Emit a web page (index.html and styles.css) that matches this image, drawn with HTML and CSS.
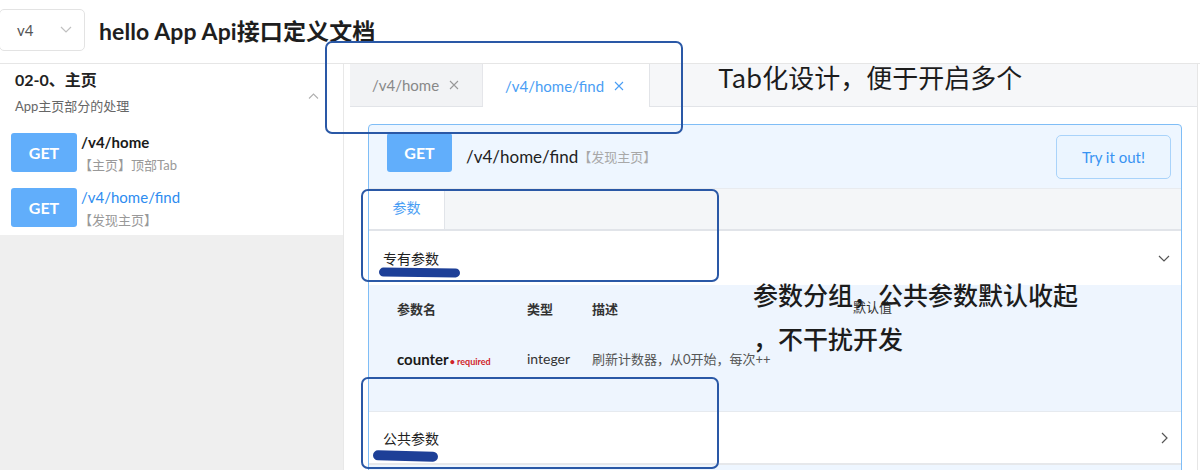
FILE: index.html
```html
<!DOCTYPE html>
<html lang="zh">
<head>
<meta charset="utf-8">
<title>hello App Api接口定义文档</title>
<link rel="stylesheet" href="styles.css">
</head>
<body>
<div class="page">
  <header class="topbar">
    <div class="select">
      <span class="select-val">v4</span>
      <svg class="select-arrow" width="12" height="7" viewBox="0 0 12 7"><polyline points="1,1 6,6 11,1" fill="none" stroke="#c0c0c0" stroke-width="1.2"/></svg>
    </div>
    <h1 class="title">hello App Api接口定义文档</h1>
  </header>
  <div class="body">
    <aside class="sidebar">
      <div class="side-white">
        <div class="group-head">
          <div class="group-text">
            <div class="group-title">02-0、主页</div>
            <div class="group-desc">App主页部分的处理</div>
          </div>
          <svg class="group-arrow" width="11" height="6" viewBox="0 0 11 6"><polyline points="1,5.5 5.5,1 10,5.5" fill="none" stroke="#b0b0b0" stroke-width="1.1"/></svg>
        </div>
        <div class="item">
          <span class="get">GET</span>
          <div class="item-text">
            <div class="item-path">/v4/home</div>
            <div class="item-sub">【主页】顶部Tab</div>
          </div>
        </div>
        <div class="item">
          <span class="get">GET</span>
          <div class="item-text">
            <div class="item-path active">/v4/home/find</div>
            <div class="item-sub">【发现主页】</div>
          </div>
        </div>
      </div>
    </aside>
    <main class="main">
      <div class="main-inner">
        <div class="tabbar">
          <div class="tab">/v4/home <svg class="x" width="10" height="10" viewBox="0 0 10 10"><path d="M1 1 L9 9 M9 1 L1 9" stroke="#999" stroke-width="1.1"/></svg></div>
          <div class="tab tab-active">/v4/home/find <svg class="x" width="10" height="10" viewBox="0 0 10 10"><path d="M1 1 L9 9 M9 1 L1 9" stroke="#4a9ef4" stroke-width="1.1"/></svg></div>
        </div>
        <div class="content">
          <section class="op">
            <div class="op-head">
              <span class="get get-lg">GET</span>
              <span class="op-path">/v4/home/find</span><span class="op-sum">【发现主页】</span>
              <button class="try">Try it out!</button>
            </div>
            <div class="op-tabs">
              <div class="op-tab">参数</div>
            </div>
            <div class="sect">
              <span>专有参数</span>
              <svg width="12" height="7" viewBox="0 0 12 7"><polyline points="1,1 6,6 11,1" fill="none" stroke="#555" stroke-width="1.2"/></svg>
            </div>
            <div class="params">
              <div class="prow phead">
                <span class="c1">参数名</span>
                <span class="c2">类型</span>
                <span class="c3">描述</span>
                <span class="c4">默认值</span>
              </div>
              <div class="prow pbody">
                <span class="c1"><span class="pname">counter</span><span class="req">• required</span></span>
                <span class="c2 ptype">integer</span>
                <span class="c3 pdesc">刷新计数器，从0开始，每次++</span>
                <span class="c4"></span>
              </div>
            </div>
            <div class="sect sect-last">
              <span>公共参数</span>
              <svg width="7" height="12" viewBox="0 0 7 12"><polyline points="1,1 6,6 1,11" fill="none" stroke="#555" stroke-width="1.2"/></svg>
            </div>
          </section>
        </div>
      </div>
    </main>
  </div>

  <div class="note-box nb1"></div>
  <div class="note-box nb2"></div>
  <div class="note-box nb3"></div>
  <div class="marker mk1"></div>
  <div class="marker mk2"></div>
  <div class="note n1">Tab化设计，便于开启多个</div>
  <div class="note n2">参数分组，公共参数默认收起</div>
  <div class="note n3">，不干扰开发</div>
</div>
</body>
</html>
```

FILE: styles.css
```css
* { box-sizing: border-box; }
html, body { margin: 0; padding: 0; }
body {
  font-family: Lato, "Noto Sans CJK SC", sans-serif;
  color: #222;
  background: #fff;
  width: 1200px;
  height: 470px;
  overflow: hidden;
}
.page { position: relative; width: 1200px; height: 470px; }

.topbar {
  height: 64px;
  display: flex;
  align-items: center;
  border-bottom: 1px solid #e6e6e6;
  padding-bottom: 4px;
}
.select {
  width: 86px;
  height: 42px;
  border: 1px solid #e3e3e3;
  border-radius: 5px;
  margin-left: -1px;
  display: flex;
  align-items: center;
  justify-content: space-between;
  padding: 0 12px 0 17px;
}
.select-val { font-size: 15px; color: #555; }
.title {
  margin: 0 0 0 14px;
  font-size: 23px;
  font-weight: 700;
  color: #1e1e1e;
  letter-spacing: 0.1px;
}

.body { display: flex; height: 406px; }
.sidebar {
  width: 344px;
  background: #efefef;
  border-right: 1px solid #e8e8e8;
}
.side-white { background: #fff; height: 171px; }
.group-head {
  display: flex;
  justify-content: space-between;
  align-items: center;
  padding: 0 24px 0 15px;
  height: 64px;
}
.group-title { font-size: 16px; font-weight: 700; color: #222; line-height: 20px; margin-top: -8px; }
.group-desc { font-size: 13px; color: #666; margin-top: 7px; line-height: 18px; }

.item {
  display: flex;
  align-items: flex-start;
  gap: 4px;
  padding: 5px 11px 0;
  height: 55px;
}
.get {
  display: inline-flex;
  align-items: center;
  justify-content: center;
  width: 66px;
  height: 39px;
  background: #61aefb;
  color: #fff;
  border-radius: 3px;
  font-size: 16px;
  font-weight: 700;
  flex: none;
}
.item-path { font-size: 15px; font-weight: 700; color: #1a1a1a; line-height: 18px; }
.item-path.active { color: #2d8cf0; font-weight: 400; }
.item-sub { font-size: 13px; color: #999; margin-top: 6px; line-height: 17px; margin-left: -2px; }

.main { flex: 1; padding-left: 6px; }
.main-inner { border-right: 1px solid #e6e6e6; height: 100%; margin-right: 2px; }
.tabbar {
  display: flex;
  height: 43px;
  background: #f6f7f9;
  border-bottom: 1px solid #e2e4e8;
}
.tab {
  width: 133px;
  height: 42px;
  display: flex;
  align-items: center;
  padding-left: 22px;
  font-size: 15px;
  color: #888;
  background: #f2f3f5;
  border-right: 1px solid #e5e6ea;
  gap: 10px;
}
.tab-active {
  width: 167px;
  height: 43px;
  background: #fff;
  color: #4a9ef4;
  border-right: 1px solid #e2e4e8;
}

.content { padding: 17px 15px 0 18px; }
.op {
  border: 1px solid #7fbdf6;
  border-radius: 4px;
  background: #eef6ff;
  height: 360px;
  overflow: hidden;
}
.op-head {
  height: 63px;
  display: flex;
  align-items: center;
  padding: 0 10px 0 18px;
}
.get-lg { margin-top: -8px; width: 65px; }
.op-path { font-size: 17px; color: #222; margin-left: 14px; }
.op-sum { font-size: 13px; color: #a8a8a8; }
.try {
  margin-left: auto;
  width: 115px;
  height: 44px;
  background: #ebf5ff;
  border: 1px solid #a9d3fa;
  border-radius: 5px;
  color: #3893f2;
  font-family: Lato, sans-serif;
  font-size: 15px;
}
.op-tabs {
  height: 43px;
  background: #f4f6f8;
  border-top: 1px solid #e8ebef;
  border-bottom: 2px solid #e1e4e9;
  display: flex;
}
.op-tab {
  width: 76px;
  height: 40px;
  background: #fff;
  color: #4a9ef4;
  font-size: 14px;
  display: flex;
  align-items: center;
  justify-content: center;
  border-right: 1px solid #e1e4e9;
  padding-bottom: 4px;
}
.sect {
  height: 54px;
  background: #fff;
  display: flex;
  align-items: center;
  justify-content: space-between;
  padding: 0 11px 0 14px;
  font-size: 14px;
  color: #222;
}
.sect-last {
  border-top: 1px solid #e6eaef;
  border-bottom: 2px solid #e6e8eb;
  padding-right: 13px;
}
.params { height: 126px; background: #eef5fe; padding-left: 28px; }
.prow { display: flex; align-items: center; }
.phead { height: 46px; }
.pbody { height: 54px; }
.c1 { width: 130px; }
.c2 { width: 65px; }
.c3 { width: 261px; }
.phead span { font-size: 13px; font-weight: 700; color: #333; }
.phead .c4 { font-weight: 400; color: #333; margin-top: -4px; }
.pname { font-size: 15px; font-weight: 700; color: #1a1a1a; }
.req { font-size: 9px; color: #d0232a; font-weight: 700; margin-left: 1px; }
.ptype { font-size: 14px; color: #333; }
.pdesc { font-size: 13px; color: #555; white-space: nowrap; }

.note-box {
  position: absolute;
  border: 2px solid #2a58a6;
  border-radius: 7px;
}
.nb1 { left: 325px; top: 41px; width: 358px; height: 93px; }
.nb2 { left: 361px; top: 189px; width: 358px; height: 93px; }
.nb3 { left: 361px; top: 377px; width: 358px; height: 92px; }
.marker {
  position: absolute;
  background: #1d3f97;
  border-radius: 6px;
}
.mk1 { left: 379px; top: 268px; width: 81px; height: 9px; transform: rotate(0.6deg); }
.mk2 { left: 373px; top: 451px; width: 65px; height: 10px; transform: rotate(1.5deg); }
.note {
  position: absolute;
  font-family: "Noto Sans CJK SC", sans-serif;
  font-weight: 500;
  color: #1c1c1c;
  line-height: 1;
  white-space: nowrap;
}
.n1 { left: 718px; top: 64px; font-size: 26px; font-weight: 400; }
.n2 { left: 753px; top: 282px; font-size: 25px; }
.n3 { left: 753px; top: 326px; font-size: 25px; }
```
